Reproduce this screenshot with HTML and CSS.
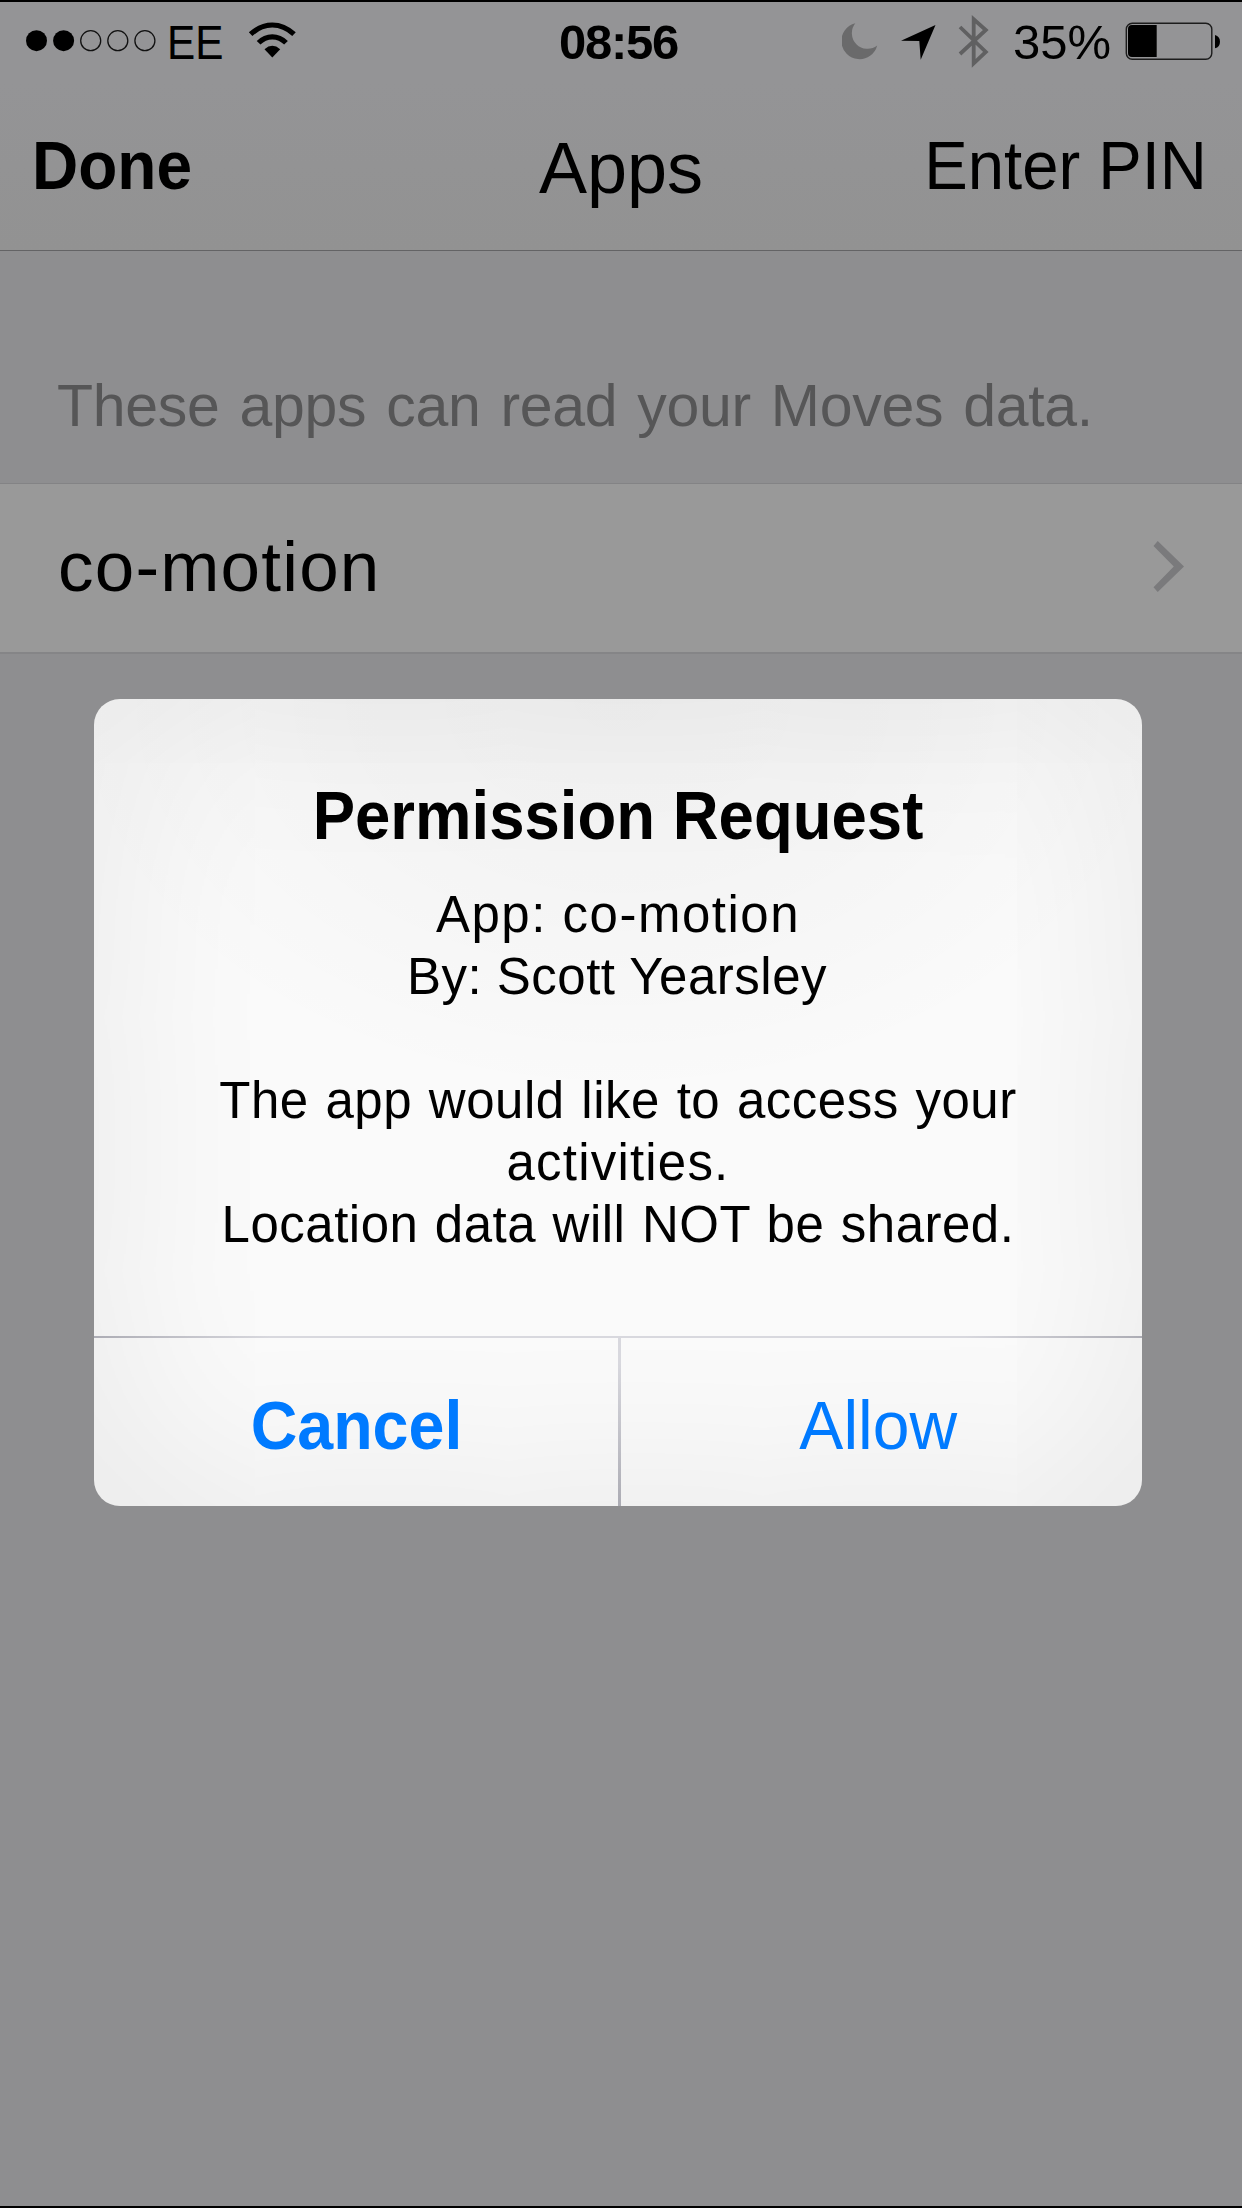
FILE: index.html
```html
<!DOCTYPE html>
<html lang="en">
<head>
<meta charset="utf-8">
<title>Apps</title>
<link rel="stylesheet" href="styles.css">
</head>
<body>
<div class="screen">
  <div class="status">
    <div class="status-left">
      <svg class="icon" width="130" height="80" viewBox="26 2 130 80">
        <circle cx="36.5" cy="40.7" r="10.5"/>
        <circle cx="63.6" cy="40.7" r="10.5"/>
        <g fill="none" stroke="#111" stroke-width="1.3">
          <circle cx="90.7" cy="40.7" r="10"/>
          <circle cx="117.8" cy="40.7" r="10"/>
          <circle cx="144.9" cy="40.7" r="10"/>
        </g>
      </svg>
      <span class="carrier">EE</span>
      <svg class="icon wifi" width="50" height="80" viewBox="248 2 50 80">
        <g fill="none" stroke="#000" stroke-width="5.2">
          <path d="M250.6 34.2Q260.500 25 272.300 25T294 34.200"/>
          <path d="M258.600 42.800Q264.500 36.800 272.300 36.800T286 42.800"/>
        </g>
        <path d="M264.500 49.200Q272.300 42.500 280.200 49.200L272.300 57.400Z"/>
      </svg>
    </div>
    <span class="clock">08:56</span>
    <div class="status-right">
      <svg class="icon" width="36" height="80" viewBox="842 2 36 80"><path fill="#6a6a6b" d="M855.300 23.300A18.200 18.200 0 1 0 877.200 45.500A15.700 15.700 0 0 1 855.300 23.300Z"/></svg>
      <svg class="icon arrow" width="35" height="80" viewBox="901 2 35 80"><path d="M935.500 25L901 40.700L919.300 41L920.700 59.700Z"/></svg>
      <svg class="icon bluetooth" width="32" height="80" viewBox="958 2 32 80"><path fill="none" stroke="#606061" stroke-width="3.800" stroke-miterlimit="10" d="M960 27L985.800 52L973.700 63.300V19.300L985.800 30L960 54"/></svg>
      <span class="percent">35%</span>
      <svg class="icon" width="97" height="80" viewBox="1125 2 97 80">
        <rect x="1126.300" y="23.200" width="85.500" height="36" rx="6" fill="none" stroke="#1c1c1c" stroke-width="1.400"/>
        <path d="M1156.700 25V57H1132Q1128 57 1128 53V29Q1128 25 1132 25Z"/>
        <path d="M1215 35Q1220 36.500 1220 41.700T1215 48.300Z"/>
      </svg>
    </div>
  </div>
  <div class="nav">
    <span class="done">Done</span>
    <span class="nav-title">Apps</span>
    <span class="pin">Enter PIN</span>
  </div>
  <div class="caption">These apps can read your Moves data.</div>
  <div class="row">
    <span class="row-label">co-motion</span>
    <svg class="icon" width="32" height="52" viewBox="1153 541 32 52"><path fill="#7a7a7c" d="M1157.700 541L1184 566.600L1157.700 592L1153.500 587.200L1173.800 566.600L1153.500 546Z"/></svg>
  </div>
  <div class="dialog">
    <div class="dialog-title"><span>Permission Request</span></div>
    <div class="message">
      <div class="line-app">App: co-motion</div>
      <div class="line-by">By: Scott Yearsley</div>
      <div class="line-gap"></div>
      <div class="line-access">The app would like to access your</div>
      <div class="line-activities">activities.</div>
      <div class="line-location">Location data will NOT be shared.</div>
    </div>
    <div class="actions">
      <div class="action cancel"><span>Cancel</span></div>
      <div class="separator"></div>
      <div class="action allow"><span>Allow</span></div>
    </div>
  </div>
</div>
</body>
</html>
```
FILE: styles.css
```css
* { box-sizing: border-box; }
body { margin: 0; }
.screen {
  position: relative;
  width: 1242px;
  height: 2208px;
  overflow: hidden;
  background: #8e8e90;
  border-top: 2px solid #000;
  border-bottom: 2px solid #000;
  font-family: "Liberation Sans", Arial, sans-serif;
  color: #000;
  white-space: nowrap;
}
.icon { display: block; flex: none; }
.status {
  display: grid;
  grid-template-columns: 1fr auto 1fr;
  align-items: center;
  height: 80px;
  background: #949496;
  font-size: 49px;
  line-height: 80px;
}
.status-left { display: flex; padding-left: 26px; }
.carrier { width: 56px; margin-left: 11px; transform: scaleX(.863); transform-origin: left; }
.wifi { margin-left: 25px; }
.clock { padding-right: 5px; font-weight: 700; letter-spacing: -1.27px; }
.status-right { display: flex; justify-content: flex-end; padding-right: 20px; }
.arrow { margin-left: 23px; }
.bluetooth { margin-left: 22px; }
.percent { width: 98px; margin: 0 14px 0 23px; }
.nav {
  display: grid;
  grid-template-columns: 1fr auto 1fr;
  align-items: center;
  height: 169px;
  padding: 0 35px 0 32px;
  border-bottom: 1px solid #636365;
  background: linear-gradient(#949496, #929292);
  font-size: 68px;
  line-height: 80px;
}
.done { padding-bottom: 3px; font-weight: 700; transform: scaleX(.941); transform-origin: left; }
.nav-title { padding: 3px 0 0 3px; font-size: 72px; }
.pin { padding-bottom: 3px; text-align: right; transform: scaleX(.959); transform-origin: right; }
.caption {
  height: 232px;
  padding: 120px 0 0 57px;
  color: #565657;
  font-size: 59px;
  line-height: 70px;
  letter-spacing: -.3px;
  word-spacing: 3.9px;
}
.row {
  display: flex;
  align-items: center;
  justify-content: space-between;
  height: 171px;
  padding: 0 57px 3px 58px;
  border-top: 1px solid #838385;
  border-bottom: 2px solid #858587;
  background: #999;
  font-size: 71px;
  line-height: 80px;
}
.row-label { padding-top: 1px; letter-spacing: 1.2px; }
.dialog {
  position: absolute;
  top: 697px;
  left: 94px;
  width: 1048px;
  height: 807px;
  padding-top: 76px;
  overflow: hidden;
  border-radius: 26px;
  background: radial-gradient(ellipse 560px 400px at 50% 0, rgba(0,0,0,.03), rgba(0,0,0,.025) 45%, transparent), #fafafa;
  box-shadow: inset 0 0 190px rgba(0,0,0,.085);
  text-align: center;
}
.dialog-title { height: 80px; font-size: 68px; font-weight: 700; line-height: 80px; transform: scaleX(.934); }
.message { height: 481px; padding-top: 29px; font-size: 51px; line-height: 62px; }
.line-gap { height: 62px; }
.line-app { letter-spacing: 1.5px; }
.line-by { padding-right: 2px; letter-spacing: .5px; }
.line-access { letter-spacing: .5px; word-spacing: 2.1px; }
.line-activities { letter-spacing: 1.2px; }
.line-location { letter-spacing: .5px; word-spacing: 1.8px; }
.actions {
  display: grid;
  grid-template-columns: 524px 3px 1fr;
  height: 170px;
  border-top: 2px solid;
  border-image: linear-gradient(90deg, #acacb4, #d8d8de 17%, #d8d8de 83%, #acacb4) 2;
  border-image-width: 2px 0 0;
}
.action { padding-top: 47px; color: #007aff; font-size: 68px; line-height: 80px; }
.action span { display: inline-block; }
.cancel { font-weight: 700; }
.cancel span { transform: scaleX(.949); }
.allow { padding-right: 6px; }
.allow span { transform: scaleX(.971); }
.separator { background: linear-gradient(#d8d8de 15%, #acacb4); }
```
